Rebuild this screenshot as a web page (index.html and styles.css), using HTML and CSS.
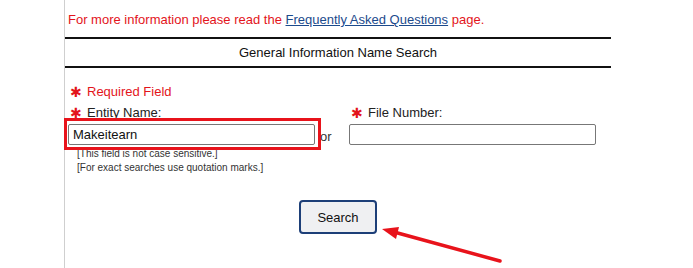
FILE: index.html
```html
<!DOCTYPE html>
<html lang="en">
<head>
<meta charset="UTF-8" />
<meta name="viewport" content="width=device-width, initial-scale=1" />
<title>General Information Name Search</title>
<link rel="stylesheet" href="styles.css">
</head>
<body>

<div class="page">
  <p class="intro">For more information please read the <a href="#">Frequently Asked Questions</a> page.</p>

  <div class="section-title">General Information Name Search</div>

  <form class="search-form">
    <div class="required"><span class="star">✱</span>Required Field</div>

    <div class="fields">
      <div class="field entity">
        <label for="entityName"><span class="star">✱</span>Entity Name:</label>
        <input type="text" id="entityName" value="Makeitearn">
        <div class="note">[This field is not case sensitive.]</div>
        <div class="note">[For exact searches use quotation marks.]</div>
      </div>
      <div class="or">or</div>
      <div class="field file">
        <label for="fileNumber"><span class="star">✱</span>File Number:</label>
        <input type="text" id="fileNumber">
      </div>
    </div>

    <div class="actions">
      <button type="submit">Search</button>
    </div>
  </form>
</div>

<!-- annotation marks drawn over the page -->
<svg class="annot" width="693" height="268" viewBox="0 0 693 268">
  <rect x="65.5" y="119.5" width="254" height="29" fill="none" stroke="#e8131b" stroke-width="3" />
  <line x1="500" y1="261" x2="394" y2="232" stroke="#e8131b" stroke-width="3.5" stroke-linecap="round" />
  <polygon points="382,229 399,227 396,239" fill="#e8131b" />
</svg>

</body>
</html>
```

FILE: styles.css
```css
body {
  margin: 0;
  background: #fff;
  font-family: "Liberation Sans", Arial, sans-serif;
  color: #111;
  position: relative;
  min-height: 268px;
}
.page {
  margin-left: 64px;
  width: 547px;
  min-height: 268px;
  border-left: 1px solid #cfcfcf;
  box-sizing: border-box;
}
.intro {
  margin: 0;
  padding: 12px 0 0 3px;
  font-size: 13px;
  line-height: 16px;
  color: #e3141b;
}
.intro a {
  color: #1b4a8c;
  text-decoration: underline;
}
.section-title {
  margin-top: 9px;
  border-top: 2px solid #111;
  border-bottom: 2px solid #111;
  height: 27px;
  line-height: 27px;
  text-align: center;
  font-size: 13px;
}
.search-form {
  padding-left: 3px;
}
.required {
  margin-top: 16px;
  font-size: 13px;
  line-height: 16px;
  color: #e3141b;
}
.star {
  display: inline-block;
  width: 17px;
  padding-left: 2px;
  font-family: "DejaVu Sans", sans-serif;
  font-size: 14px;
  font-weight: bold;
  line-height: 16px;
  vertical-align: top;
  color: #e3141b;
}
.fields {
  display: flex;
  margin-top: 5px;
}
.field label {
  display: block;
  font-size: 13px;
  line-height: 16px;
  color: #222;
}
.field input {
  display: block;
  margin-top: 3px;
  width: 247px;
  height: 21px;
  box-sizing: border-box;
  border: 1px solid #777;
  border-radius: 2px;
  padding: 0 4px;
  font-family: inherit;
  font-size: 13px;
  color: #111;
}
.note {
  padding-left: 9px;
  font-size: 10px;
  line-height: 14px;
  color: #333;
}
.note:first-of-type {
  margin-top: 2px;
}
.or {
  margin: 24px 0 0 5px;
  width: 29px;
  font-size: 13px;
  line-height: 16px;
  color: #333;
}
.actions {
  margin-top: 25px;
  text-align: center;
  padding-right: 3px;
}
.actions button {
  width: 78px;
  height: 34px;
  border: 2px solid #1d3f78;
  border-radius: 4px;
  background: #eff0f2;
  font-family: inherit;
  font-size: 13px;
  color: #111;
  cursor: pointer;
}
.annot {
  position: absolute;
  left: 0;
  top: 0;
  pointer-events: none;
}
```
